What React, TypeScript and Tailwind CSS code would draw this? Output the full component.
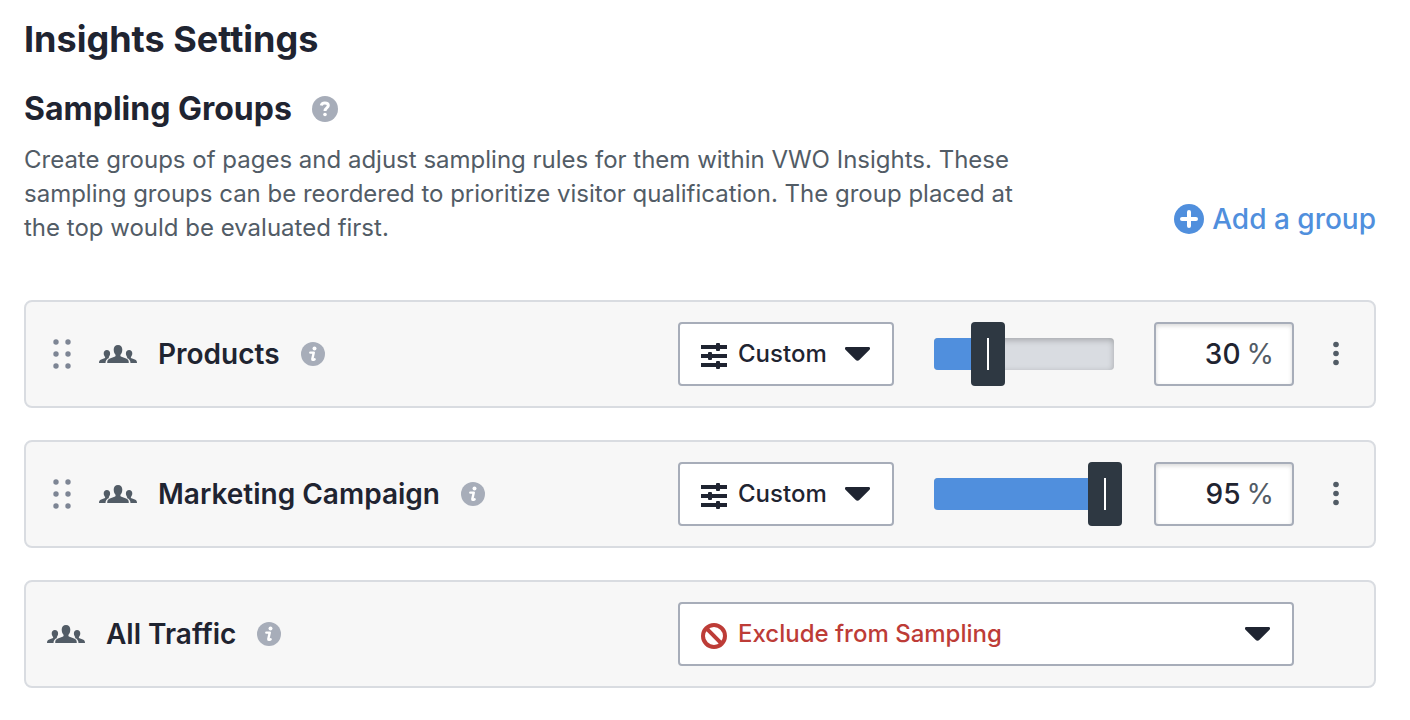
import { useState } from 'react';
import type { ReactNode } from 'react';
import clsx from 'clsx';

interface Group {
  id: string;
  name: string;
  percent: number;
}

const initialGroups: Group[] = [
  { id: 'products', name: 'Products', percent: 30 },
  { id: 'marketing', name: 'Marketing Campaign', percent: 95 },
];

function PeopleIcon() {
  return (
    <svg className="h-[18px] w-[38px] shrink-0" viewBox="0 0 38 18" fill="#525c66" aria-hidden="true">
      <path d="M19 0c2.700 0 4.300 1.800 4.300 4.600 0 2.400-.8 4.200-1.800 5.200-.3 1 0 1.600 1 2l4.600 1.800c2 .8 2.700 2 2.700 4.400H8.200c0-2.400.7-3.600 2.700-4.400l4.600-1.800c1-.4 1.300-1 1-2-1-1-1.800-2.800-1.800-5.200C14.700 1.800 16.300 0 19 0z" />
      <path d="M7.900 5c2 0 3.200 1.300 3.200 3.300 0 1.600-.5 2.800-1.300 3.600-.1.500 0 .8.300 1.100-2.500 1-3.500 2.400-3.600 5H0c0-1.800.6-2.700 2.200-3.400l3.200-1.300c.7-.3.9-.7.7-1.400-.8-.8-1.400-2-1.400-3.600C4.700 6.300 5.900 5 7.900 5z" />
      <path d="M30.100 5c-2 0-3.200 1.300-3.200 3.300 0 1.600.5 2.800 1.300 3.600.1.500 0 .8-.3 1.100 2.500 1 3.500 2.400 3.600 5H38c0-1.800-.6-2.700-2.200-3.400l-3.200-1.300c-.7-.3-.9-.7-.7-1.400.8-.8 1.400-2 1.400-3.600 0-2-1.200-3.300-3.200-3.300z" />
    </svg>
  );
}

function InfoIcon() {
  return (
    <svg className="size-6" viewBox="0 0 24 24" aria-hidden="true">
      <circle cx="12" cy="12" r="12" fill="#a7adb9" />
      <circle cx="13.500" cy="6.500" r="2" fill="#fff" />
      <path d="M9.300 10.600h3.500l-1.500 6.500c-.1.800.6 1 2.300.2" fill="none" stroke="#fff" strokeWidth="2.400" strokeLinejoin="round" strokeLinecap="round" />
    </svg>
  );
}

function HelpIcon() {
  return (
    <svg className="size-[26px]" viewBox="0 0 26 26" fill="none" aria-hidden="true">
      <circle cx="13" cy="13" r="13" fill="#a7adb9" />
      <path d="M9.300 9.600c.3-1.900 1.700-2.700 3.500-2.700 2.100 0 3.500 1 3.500 2.700 0 2.300-3.300 2.300-3.300 5.300" stroke="#fff" strokeWidth="3" />
      <circle cx="13" cy="18.500" r="1.800" fill="#fff" />
    </svg>
  );
}

function SlidersIcon() {
  return (
    <svg className="size-[26px]" viewBox="0 0 26 26" fill="#1f2431">
      <path d="M0 2h26v4H0zM0 11h26v4H0zM0 20h26v4H0z" />
      <rect x="15" y="0" width="4" height="8" rx="1" />
      <rect x="7" y="9" width="4" height="8" rx="1" />
      <rect x="15" y="18" width="4" height="8" rx="1" />
    </svg>
  );
}

function BanIcon() {
  return (
    <svg className="size-[26px]" viewBox="0 0 26 26" fill="none" stroke="#bd3c37" strokeWidth="4">
      <circle cx="13" cy="13" r="11" />
      <path d="M5.200 5.200l15.600 15.600" />
    </svg>
  );
}

interface SelectProps {
  label: string;
  icon: ReactNode;
  options: string[];
  className?: string;
}

function ModeSelect({ label, icon, options, className }: SelectProps) {
  return (
    <div className={clsx('relative h-16 shrink-0', className)}>
      <select
        aria-label={label}
        className="size-full appearance-none rounded-sm border-2 border-[#a7adb9] bg-white pr-12 pl-[58px] text-2xl font-medium"
      >
        {options.map((option) => (
          <option key={option}>{option}</option>
        ))}
      </select>
      <span className="pointer-events-none absolute top-[21px] left-[23px]">{icon}</span>
      <svg className="pointer-events-none absolute top-[25px] right-6 h-3.5 w-[25px]" viewBox="0 0 25 14" fill="#1f2431">
        <path d="M1.500 0h22c1.500 0 2 1.500 1 2.700l-10 10c-1.300 1.300-2.700 1.300-4 0l-10-10C-.5 1.500 0 0 1.500 0z" />
      </svg>
    </div>
  );
}

interface SliderProps {
  label: string;
  value: number;
  onChange: (value: number) => void;
}

function PercentSlider({ label, value, onChange }: SliderProps) {
  return (
    <div className="relative flex h-16 w-[180px] shrink-0 items-center">
      <div className="h-8 w-full overflow-hidden rounded-sm bg-[#d9dce1] shadow-[inset_0_2px_6px_rgba(0,0,0,0.25)]">
        <div className="h-full bg-[#508fdd]" style={{ width: `${value}%` }} />
      </div>
      {/* Input is wider than the track so the thumb centers on the value */}
      <input
        type="range"
        min={0}
        max={100}
        value={value}
        aria-label={label}
        onChange={(e) => onChange(Number(e.target.value))}
        className="absolute inset-y-0 -left-[17px] h-16 w-[214px] cursor-pointer appearance-none bg-transparent [&::-webkit-slider-thumb]:h-16 [&::-webkit-slider-thumb]:w-[34px] [&::-webkit-slider-thumb]:appearance-none [&::-webkit-slider-thumb]:rounded-sm [&::-webkit-slider-thumb]:bg-[#2e3842] [&::-webkit-slider-thumb]:bg-[linear-gradient(#fff,#fff)] [&::-webkit-slider-thumb]:bg-[length:2px_32px] [&::-webkit-slider-thumb]:bg-center [&::-webkit-slider-thumb]:bg-no-repeat"
      />
    </div>
  );
}

function Row({ children }: { children: ReactNode }) {
  return (
    <li className="flex items-center rounded-lg border-2 border-[#d9dce1] bg-[#f7f7f7] py-5 pl-[21px]">
      {children}
    </li>
  );
}

function RowName({ name }: { name: string }) {
  return (
    <div className="flex min-w-0 flex-1 items-center gap-[21px]">
      <PeopleIcon />
      <h3 className="text-[28px] leading-8 font-semibold whitespace-nowrap">{name}</h3>
      <button type="button" aria-label={`About ${name}`}>
        <InfoIcon />
      </button>
    </div>
  );
}

interface GroupRowProps {
  group: Group;
  onChange: (percent: number) => void;
}

function GroupRow({ group, onChange }: GroupRowProps) {
  return (
    <Row>
      <button type="button" aria-label={`Reorder ${group.name}`} className="mr-5 flex w-8 cursor-grab justify-center">
        <svg className="h-8 w-6" viewBox="0 0 24 32" fill="#7d8594">
          {[4, 16, 28].map((y) => (
            <g key={y}>
              <circle cx="5" cy={y} r="2.700" />
              <circle cx="17" cy={y} r="2.700" />
            </g>
          ))}
        </svg>
      </button>
      <RowName name={group.name} />

      <div className="flex items-center gap-10">
        <ModeSelect
          label={`${group.name} sampling mode`}
          icon={<SlidersIcon />}
          options={['Custom', 'Exclude from Sampling']}
          className="w-[216px]"
        />
        <PercentSlider label={`${group.name} sampling rate`} value={group.percent} onChange={onChange} />
        <label className="flex h-16 w-[140px] shrink-0 items-center gap-1.5 rounded-sm border-2 border-[#a7adb9] bg-white pr-[18px] text-[28px] shadow-[inset_0_2px_4px_rgba(0,0,0,0.15)]">
          <input
            type="text"
            inputMode="numeric"
            value={group.percent}
            aria-label={`${group.name} percentage`}
            onChange={(e) => onChange(Math.min(100, Number(e.target.value) || 0))}
            className="w-0 min-w-0 flex-1 bg-transparent text-right font-medium outline-none"
          />
          <span className="text-[#525c66]">%</span>
        </label>
      </div>

      <button type="button" aria-label={`${group.name} options`} className="mr-[18px] ml-[22px] flex w-10 justify-center">
        <svg className="h-7 w-2" viewBox="0 0 8 28" fill="#525c66">
          <circle cx="4" cy="4.500" r="2.800" />
          <circle cx="4" cy="13.500" r="2.800" />
          <circle cx="4" cy="22.500" r="2.800" />
        </svg>
      </button>
    </Row>
  );
}

export default function App() {
  const [groups, setGroups] = useState(initialGroups);

  const updatePercent = (id: string, percent: number) => {
    setGroups(groups.map((g) => (g.id === id ? { ...g, percent } : g)));
  };

  return (
    <main className="bg-white pt-[15px] pr-[34px] pb-8 pl-6 font-[Inter,'Liberation_Sans',sans-serif] text-[#1f2431]">
      <h1 className="text-4xl leading-12 font-bold">Insights Settings</h1>

      {/* Section header */}
      <div className="mt-[26px] flex items-end justify-between">
        <div>
          <div className="flex items-center gap-5">
            <h2 className="text-[32px] leading-10 font-bold">Sampling Groups</h2>
            <button type="button" aria-label="Help">
              <HelpIcon />
            </button>
          </div>
          <p className="mt-3.5 max-w-[1010px] text-2xl leading-[34px] text-[#525c66]">
            Create groups of pages and adjust sampling rules for them within VWO Insights. These sampling
            groups can be reordered to prioritize visitor qualification. The group placed at the top would be
            evaluated first.
          </p>
        </div>
        <button type="button" className="mb-2 flex shrink-0 items-center gap-2 text-[28px] leading-9 font-medium text-[#508fdd]">
          <svg className="size-[30px]" viewBox="0 0 30 30" aria-hidden="true">
            <circle cx="15" cy="15" r="15" fill="#508fdd" />
            <path d="M15 8v14M8 15h14" stroke="#fff" strokeWidth="4" strokeLinecap="round" />
          </svg>
          Add a group
        </button>
      </div>

      {/* Groups */}
      <ul className="mt-[55px] flex flex-col gap-8">
        {groups.map((group) => (
          <GroupRow key={group.id} group={group} onChange={(percent) => updatePercent(group.id, percent)} />
        ))}
        <Row>
          <RowName name="All Traffic" />
          <ModeSelect
            label="All Traffic sampling mode"
            icon={<BanIcon />}
            options={['Exclude from Sampling', 'Custom']}
            className="mr-20 w-[616px] text-[#bd3c37]"
          />
        </Row>
      </ul>
    </main>
  );
}
